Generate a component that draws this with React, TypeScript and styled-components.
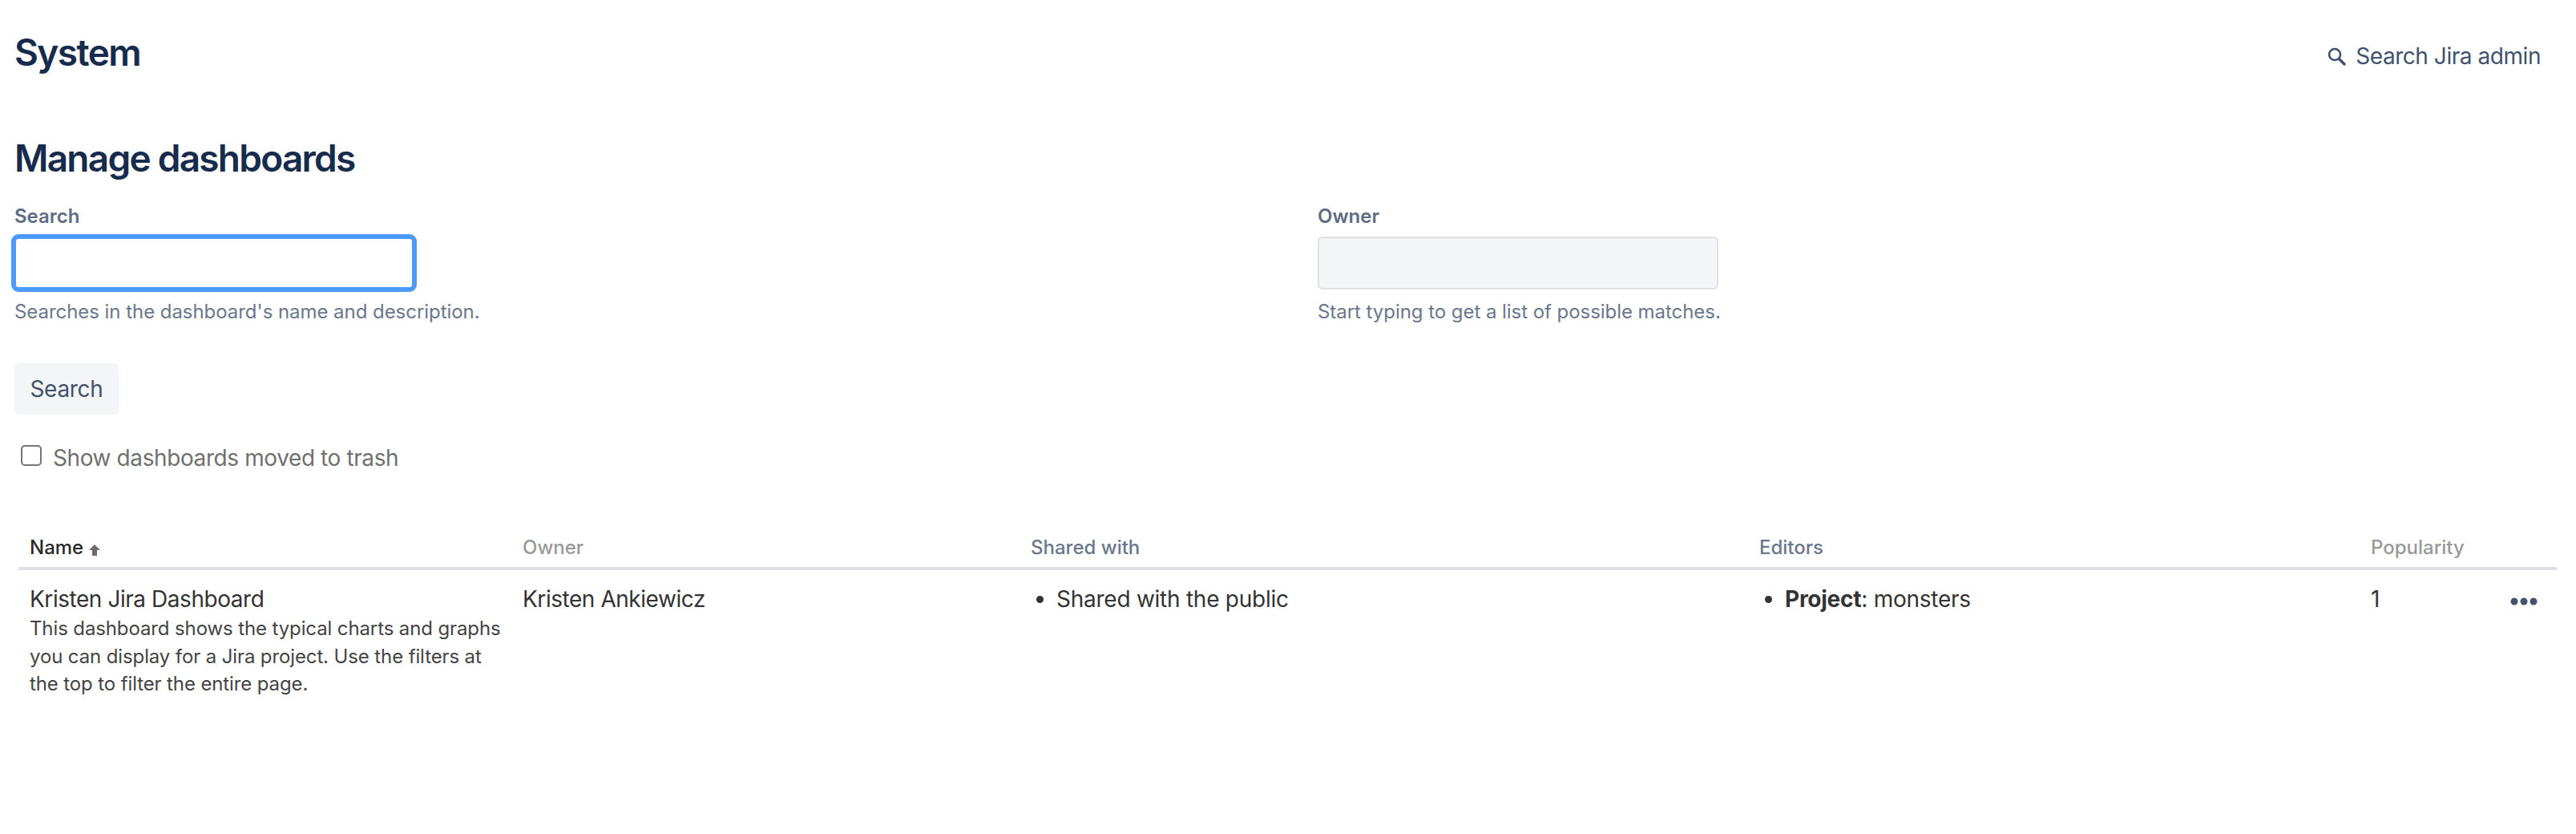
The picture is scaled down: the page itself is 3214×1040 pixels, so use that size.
import React from 'react';
import styled, { createGlobalStyle } from 'styled-components';

const GlobalStyle = createGlobalStyle`
  html, body {
    margin: 0;
    background: #fff;
    font-family: Inter, "Noto Sans", sans-serif;
    color: #172b4d;
  }
`;

const Page = styled.div`
  width: 3214px;
  height: 1040px;
  overflow: hidden;
  padding: 0 44px 0 18px;
  box-sizing: border-box;
`;

const TopBar = styled.header`
  display: flex;
  justify-content: space-between;
  align-items: center;
  height: 130px;
`;

const SystemTitle = styled.h1`
  margin: 0;
  font-size: 46px;
  font-weight: 600;
  letter-spacing: -1.6px;
  color: #172b4d;
`;

const AdminSearch = styled.a`
  display: flex;
  align-items: center;
  gap: 12px;
  margin-top: 10px;
  font-size: 28px;
  letter-spacing: -0.45px;
  color: #42526e;
`;

const PageTitle = styled.h2`
  margin: 37px 0 0;
  font-size: 46px;
  line-height: 60px;
  font-weight: 600;
  letter-spacing: -1.75px;
  color: #172b4d;
`;

const FilterForm = styled.form`
  display: grid;
  grid-template-columns: 1626px 1fr;
  margin-top: 27px;
`;

const Field = styled.div`
  display: flex;
  flex-direction: column;
`;

const FieldLabel = styled.label`
  font-size: 24px;
  line-height: 32px;
  font-weight: 600;
  color: #5e6c84;
`;

const TextInput = styled.input<{ $focused?: boolean }>`
  box-sizing: border-box;
  width: 500px;
  height: 66px;
  margin: 9px 0 0 ${(p) => (p.$focused ? '-1px' : '0')};
  border-radius: 6px;
  outline: none;
  border: ${(p) => (p.$focused ? '3px solid #4c9aff' : '2px solid #dfe1e6')};
  background: ${(p) => (p.$focused ? '#fff' : '#f4f5f7')};
  box-shadow: ${(p) => (p.$focused ? '0 0 0 3px #4c9aff' : 'none')};
`;

const Hint = styled.div`
  margin-top: 12px;
  font-size: 24px;
  line-height: 32px;
  letter-spacing: -0.05px;
  color: #6b778c;
`;

const SearchButton = styled.button`
  display: block;
  height: 64px;
  width: 130px;
  margin-top: 48px;
  border: 0;
  border-radius: 6px;
  background: #f4f5f7;
  color: #42526e;
  font-family: inherit;
  font-size: 28px;
  letter-spacing: -0.3px;
`;

const TrashRow = styled.label`
  display: flex;
  align-items: center;
  gap: 14px;
  margin: 34px 0 0 8px;
  font-size: 28px;
  line-height: 40px;
  letter-spacing: -0.4px;
  color: #707070;
`;

const TrashBox = styled.span`
  box-sizing: border-box;
  width: 26px;
  height: 26px;
  margin-top: -6px;
  border: 2px solid #767676;
  border-radius: 5px;
  background: #fff;
`;

const DashboardTable = styled.table`
  table-layout: fixed;
  width: 3167px;
  margin: 76px 0 0 5px;
  border-collapse: collapse;
`;

const HeaderCell = styled.th<{ $tone: 'dark' | 'grey' | 'slate' }>`
  padding: 0 14px 8px;
  height: 32px;
  border-bottom: 4px solid #dfe1e6;
  text-align: left;
  font-size: 24px;
  line-height: 32px;
  font-weight: 500;
  color: ${(p) => ({ dark: '#292929', grey: '#999999', slate: '#6b778c' })[p.$tone]};
`;

const SortArrow = styled.svg`
  margin-left: 6px;
  vertical-align: -3px;
`;

const BodyCell = styled.td`
  padding: 16px 14px 0;
  vertical-align: top;
  font-size: 28px;
  line-height: 40px;
  letter-spacing: -0.45px;
  color: #333;
`;

const Description = styled.div`
  margin-right: -6px;
  font-size: 24px;
  line-height: 34.6px;
  letter-spacing: -0.12px;
  color: #444;
`;

const BulletList = styled.ul`
  margin: 0;
  padding-left: 32px;
  letter-spacing: -0.25px;
`;

const PopularityRow = styled.div`
  display: flex;
  justify-content: space-between;
`;

const MoreDots = styled.svg`
  display: block;
  margin: 18px 10px 0 0;
`;

const App = () => (
  <Page>
    <GlobalStyle />
    <TopBar>
      <SystemTitle>System</SystemTitle>
      <AdminSearch>
        <svg width="24" height="24" viewBox="0 0 24 24" fill="none" stroke="#42526e">
          <circle cx="10" cy="10" r="7" strokeWidth="2.6" />
          <path d="M15.5 15.5 L22 22" strokeWidth="3.4" strokeLinecap="round" />
        </svg>
        Search Jira admin
      </AdminSearch>
    </TopBar>
    <PageTitle>Manage dashboards</PageTitle>
    <FilterForm>
      <Field>
        <FieldLabel>Search</FieldLabel>
        <TextInput $focused />
        <Hint>Searches in the dashboard's name and description.</Hint>
      </Field>
      <Field>
        <FieldLabel>Owner</FieldLabel>
        <TextInput />
        <Hint>Start typing to get a list of possible matches.</Hint>
      </Field>
    </FilterForm>
    <SearchButton type="button">Search</SearchButton>
    <TrashRow>
      <TrashBox />
      Show dashboards moved to trash
    </TrashRow>
    <DashboardTable>
      <colgroup>
        <col width="615" />
        <col width="634" />
        <col width="909" />
        <col width="763" />
        <col width="246" />
      </colgroup>
      <thead>
        <tr>
          <HeaderCell $tone="dark">
            Name
            <SortArrow width="16" height="16" viewBox="0 0 16 16" fill="#6b6b6b">
              <path d="M8 1 L15 8 H11 V15 H5 V8 H1 Z" />
            </SortArrow>
          </HeaderCell>
          <HeaderCell $tone="grey">Owner</HeaderCell>
          <HeaderCell $tone="slate">Shared with</HeaderCell>
          <HeaderCell $tone="slate">Editors</HeaderCell>
          <HeaderCell $tone="grey">Popularity</HeaderCell>
        </tr>
      </thead>
      <tbody>
        <tr>
          <BodyCell>
            <div>Kristen Jira Dashboard</div>
            <Description>
              This dashboard shows the typical charts and graphs you can display for a Jira project. Use the filters at the top to filter the entire page.
            </Description>
          </BodyCell>
          <BodyCell>Kristen Ankiewicz</BodyCell>
          <BodyCell>
            <BulletList>
              <li>Shared with the public</li>
            </BulletList>
          </BodyCell>
          <BodyCell>
            <BulletList>
              <li>
                <strong>Project</strong>: monsters
              </li>
            </BulletList>
          </BodyCell>
          <BodyCell>
            <PopularityRow>
              1
              <MoreDots width="34" height="10" viewBox="0 0 34 10" fill="#42526e">
                <circle cx="5" cy="5" r="4.5" />
                <circle cx="17" cy="5" r="4.5" />
                <circle cx="29" cy="5" r="4.5" />
              </MoreDots>
            </PopularityRow>
          </BodyCell>
        </tr>
      </tbody>
    </DashboardTable>
  </Page>
);

export default App;
